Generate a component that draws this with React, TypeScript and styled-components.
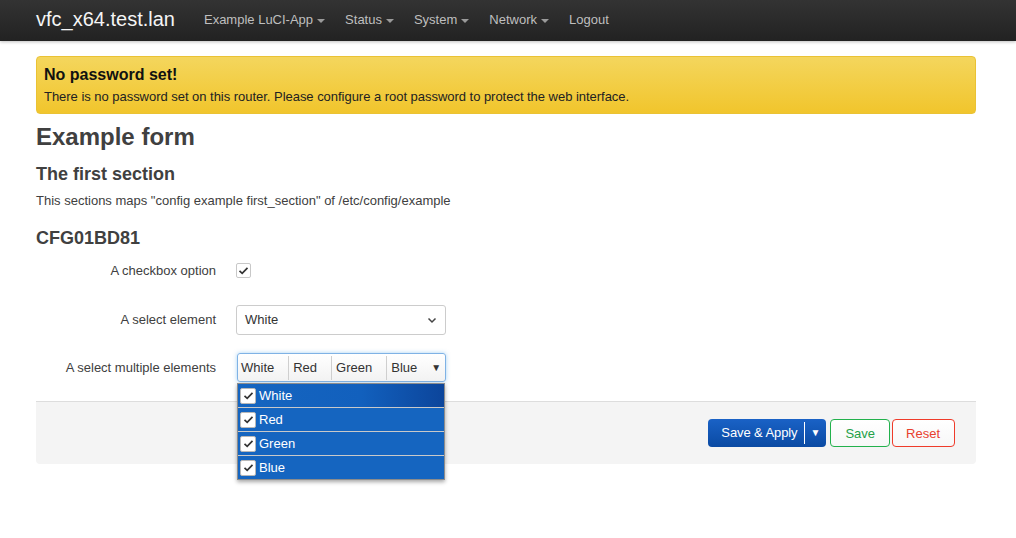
import * as React from 'react';
import styled, { createGlobalStyle } from 'styled-components';

const GlobalStyle = createGlobalStyle`
  body {
    margin: 0;
    font-family: "Liberation Sans", Arial, sans-serif;
    font-size: 13px;
    line-height: 18px;
    color: #404040;
    background: #fff;
  }
`;

const colors = ['White', 'Red', 'Green', 'Blue'];

const Page = styled.div`
  min-height: 100vh;
`;

const Header = styled.header`
  height: 41px;
  background: linear-gradient(#333333, #222222);
  box-shadow: 0 1px 3px rgba(0, 0, 0, 0.25);
`;

const HeaderInner = styled.div`
  display: flex;
  align-items: center;
  height: 40px;
  padding: 0 36px;
`;

const Brand = styled.a`
  font-size: 20px;
  color: #f5f5f5;
  margin-right: 19px;
  margin-top: -3px;
`;

const NavItem = styled.a`
  display: flex;
  align-items: center;
  padding: 0 10px;
  color: #bfbfbf;
  font-size: 13px;
`;

const Caret = styled.span`
  display: inline-block;
  margin-left: 4px;
  margin-top: 2px;
  border-top: 4px solid #9a9a9a;
  border-left: 4px solid transparent;
  border-right: 4px solid transparent;
`;

const Main = styled.main`
  width: 940px;
  margin: 0 0 0 36px;
`;

const Alert = styled.div`
  margin-top: 15px;
  padding: 7px;
  border: 1px solid #eac234;
  border-radius: 4px;
  background: linear-gradient(#f4d65d, #f1c52c);
  color: #222;
`;

const AlertTitle = styled.h4`
  margin: 0;
  font-size: 16px;
  line-height: 22px;
  font-weight: bold;
  color: #111;
`;

const AlertText = styled.p`
  margin: 2px 0 0;
  letter-spacing: -0.03px;
`;

const PageTitle = styled.h2`
  margin: 8px 0 0;
  font-size: 24px;
  line-height: 30px;
`;

const SectionTitle = styled.h3`
  margin: 10px 0 0;
  font-size: 18px;
  line-height: 24px;
`;

const Descr = styled.p`
  margin: 6px 0 0;
`;

const NodeTitle = styled.h4`
  margin: 16px 0 0;
  font-size: 18px;
  line-height: 24px;
`;

const Fields = styled.div`
  display: flex;
  flex-direction: column;
`;

const Row = styled.div<{ $space: number; $h: number }>`
  display: grid;
  grid-template-columns: 180px 210px;
  column-gap: 20px;
  align-items: center;
  margin-top: ${(p) => p.$space}px;
  height: ${(p) => p.$h}px;
`;

const Label = styled.label`
  text-align: right;
`;

const CheckBox = styled.span<{ $light?: boolean }>`
  display: inline-flex;
  align-items: center;
  justify-content: center;
  box-sizing: border-box;
  width: ${(p) => (p.$light ? '16px' : '15px')};
  height: ${(p) => (p.$light ? '16px' : '15px')};
  border: 1px solid ${(p) => (p.$light ? '#b8b8b8' : '#c8c8c8')};
  border-radius: 2px;
  background: #fff;
  flex: none;
`;

const Select = styled.div`
  display: flex;
  align-items: center;
  justify-content: space-between;
  box-sizing: border-box;
  height: 30px;
  padding: 0 8px;
  border: 1px solid #ccc;
  border-radius: 3px;
  background: #fff;
  color: #333;
`;

const MultiWrap = styled.div`
  position: relative;
`;

const MultiSelect = styled.div`
  display: flex;
  align-items: center;
  box-sizing: border-box;
  height: 29px;
  margin-left: 1px;
  padding-right: 4px;
  border: 1px solid #7fb2e5;
  border-radius: 3px;
  background: linear-gradient(#ffffff, #f2f2f2);
  box-shadow: 0 0 4px rgba(82, 168, 236, 0.5);
  color: #333;
`;

const Chip = styled.span<{ $first?: boolean }>`
  padding: 0 14px 0 ${(p) => (p.$first ? '3px' : '4px')};
  line-height: 24px;
  border-left: ${(p) => (p.$first ? 'none' : '1px solid #cfcfcf')};
  flex: none;
`;

const MultiArrow = styled.span`
  margin-left: auto;
  font-size: 10px;
  color: #333;
`;

const Dropdown = styled.ul`
  position: absolute;
  top: 30px;
  left: 1px;
  width: 208px;
  box-sizing: border-box;
  margin: 0;
  padding: 0;
  list-style: none;
  border: 1px solid #8c8c8c;
  background: #1565c0;
  box-shadow: 0 2px 4px rgba(0, 0, 0, 0.35);
  z-index: 5;
`;

const Option = styled.li<{ $active?: boolean }>`
  display: flex;
  align-items: center;
  gap: 3px;
  height: 23px;
  padding: 0 2px;
  color: #fff;
  background: ${(p) =>
    p.$active ? 'linear-gradient(90deg, #1565c0 0%, #1260bd 60%, #0c459b 100%)' : '#1565c0'};
  border-top: ${(p) => (p.$active ? 'none' : '1px solid #c9c9c9')};
`;

const Actions = styled.div`
  display: flex;
  justify-content: flex-end;
  margin-top: 19px;
  padding: 17px 21px 17px 0;
  border-top: 1px solid #ddd;
  border-radius: 0 0 4px 4px;
  background: #f4f4f4;
`;

const Button = styled.button<{ $tone: 'green' | 'red' }>`
  height: 28px;
  padding: ${(p) => (p.$tone === 'red' ? '0 14px 0 13px' : '0 14px')};
  margin-left: ${(p) => (p.$tone === 'red' ? '2px' : '4px')};
  font-family: inherit;
  font-size: 13px;
  border-radius: 4px;
  background: linear-gradient(#ffffff, #f7f7f7);
  border: 1px solid ${(p) => (p.$tone === 'green' ? '#22b14c' : '#ef3b2a')};
  color: ${(p) => (p.$tone === 'green' ? '#23a047' : '#e8402e')};
`;

const ApplyGroup = styled.div`
  display: flex;
  align-items: center;
  height: 28px;
  border-radius: 4px;
  background: linear-gradient(#1a62c6, #0a4aa3);
  color: #fff;
  font-size: 13px;
`;

const ApplyMain = styled.span`
  padding: 0 7px 0 13px;
  line-height: 28px;
  letter-spacing: -0.1px;
`;

const ApplySplit = styled.span`
  display: flex;
  align-items: center;
  height: 22px;
  padding: 0 6px 0 5px;
  border-left: 1px solid #fff;
  font-size: 10px;
`;

const Check = () => (
  <svg width="11" height="9" viewBox="0 0 11 9">
    <polyline points="1.5,4.8 4.2,7.3 9.5,1.8" fill="none" stroke="#333" strokeWidth="1.7" />
  </svg>
);

const Chevron = () => (
  <svg width="10" height="7" viewBox="0 0 10 7">
    <polyline points="1.5,1.5 5,5 8.5,1.5" fill="none" stroke="#444" strokeWidth="1.5" />
  </svg>
);

export default function App() {
  return (
    <Page>
      <GlobalStyle />
      <Header>
        <HeaderInner>
          <Brand>vfc_x64.test.lan</Brand>
          <NavItem>
            Example LuCI-App<Caret />
          </NavItem>
          <NavItem>
            Status<Caret />
          </NavItem>
          <NavItem>
            System<Caret />
          </NavItem>
          <NavItem>
            Network<Caret />
          </NavItem>
          <NavItem>Logout</NavItem>
        </HeaderInner>
      </Header>
      <Main>
        <Alert>
          <AlertTitle>No password set!</AlertTitle>
          <AlertText>
            There is no password set on this router. Please configure a root password to protect the web interface.
          </AlertText>
        </Alert>
        <PageTitle>Example form</PageTitle>
        <SectionTitle>The first section</SectionTitle>
        <Descr>This sections maps "config example first_section" of /etc/config/example</Descr>
        <NodeTitle>CFG01BD81</NodeTitle>
        <Fields>
          <Row $space={5} $h={31}>
            <Label>A checkbox option</Label>
            <div>
              <CheckBox>
                <Check />
              </CheckBox>
            </div>
          </Row>
          <Row $space={19} $h={30}>
            <Label>A select element</Label>
            <Select>
              White
              <Chevron />
            </Select>
          </Row>
          <Row $space={18} $h={29}>
            <Label>A select multiple elements</Label>
            <MultiWrap>
              <MultiSelect>
                {colors.map((c, i) => (
                  <Chip key={c} $first={i === 0}>
                    {c}
                  </Chip>
                ))}
                <MultiArrow>▼</MultiArrow>
              </MultiSelect>
              <Dropdown>
                {colors.map((c, i) => (
                  <Option key={c} $active={i === 0}>
                    <CheckBox $light>
                      <Check />
                    </CheckBox>
                    {c}
                  </Option>
                ))}
              </Dropdown>
            </MultiWrap>
          </Row>
        </Fields>
        <Actions>
          <ApplyGroup>
            <ApplyMain>Save &amp; Apply</ApplyMain>
            <ApplySplit>▼</ApplySplit>
          </ApplyGroup>
          <Button $tone="green">Save</Button>
          <Button $tone="red">Reset</Button>
        </Actions>
      </Main>
    </Page>
  );
}
